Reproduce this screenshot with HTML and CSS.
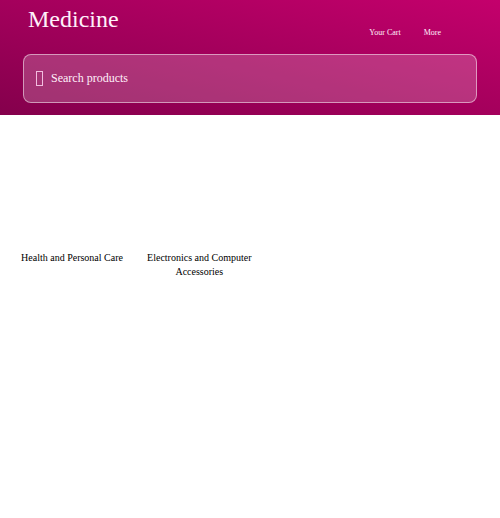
FILE: index.html
```html
<!DOCTYPE html>
<html lang="en">
<head>
<meta charset="utf-8">
<title>Medicine</title>
<link rel="stylesheet" href="styles.css">
</head>
<body>
<header class="header">
  <div class="topbar">
    <h1 class="title">Medicine</h1>
    <nav class="nav"><a>Your Cart</a><a>More</a></nav>
  </div>
  <div class="search">
    <span class="search-icon"></span>
    <span class="search-label">Search products</span>
  </div>
</header>
<main class="categories">
  <div class="category">Health and Personal Care</div>
  <div class="category">Electronics and Computer Accessories</div>
</main>
</body>
</html>
```

FILE: styles.css
```css
* { box-sizing: border-box; }
body {
  margin: 0;
  background: #fff;
  font-family: "Liberation Serif", serif;
}
.header {
  height: 115px;
  padding: 0 23px;
  color: #fff0fa;
  background: linear-gradient(to top right, #84004c, #c4006c);
}
.topbar {
  display: flex;
  justify-content: space-between;
  height: 54px;
  padding: 5px 36px 0 5px;
}
.title {
  margin: 0;
  font-size: 24px;
  line-height: 28px;
  font-weight: 400;
}
.nav {
  display: flex;
  gap: 23px;
  padding-top: 23px;
  font-size: 8px;
  line-height: 10px;
}
.search {
  display: flex;
  align-items: center;
  height: 49px;
  padding: 0 0 2px 12px;
  border: 1px solid rgba(255, 255, 255, 0.5);
  border-radius: 8px;
  background: rgba(255, 255, 255, 0.2);
}
.search-icon {
  width: 7px;
  height: 15px;
  margin: 2px 8px 0 0;
  border: 1px solid rgba(255, 214, 242, 0.85);
}
.search-label {
  font-size: 12px;
  line-height: 14px;
}
.categories {
  display: grid;
  grid-template-columns: 108px 108.6px;
  column-gap: 19px;
  padding: 136px 0 0 18px;
}
.category {
  font-size: 10px;
  line-height: 14px;
  text-align: center;
  color: #000;
}
```
